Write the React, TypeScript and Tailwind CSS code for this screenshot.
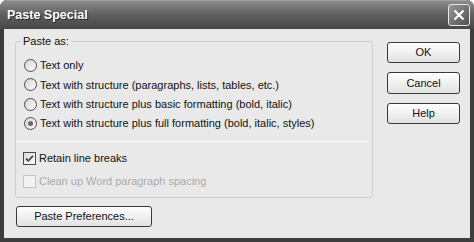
import { useState } from 'react';

const OPTIONS = [
  'Text only',
  'Text with structure (paragraphs, lists, tables, etc.)',
  'Text with structure plus basic formatting (bold, italic)',
  'Text with structure plus full formatting (bold, italic, styles)',
];

const font = "font-['Liberation_Sans',Arial,sans-serif]";

function Radio({ checked }: { checked: boolean }) {
  return (
    <span className="w-[13px] h-[13px] rounded-full border border-[#4a4a4a] bg-gradient-to-br from-[#d8d8d8] to-[#fafafa] flex items-center justify-center shrink-0">
      {checked && <span className="w-[5px] h-[5px] rounded-full bg-[#6a6a6a]" />}
    </span>
  );
}

function Checkbox({ checked, disabled }: { checked: boolean; disabled?: boolean }) {
  return (
    <span
      className={`w-[13px] h-[13px] border shrink-0 flex items-center justify-center ${
        disabled ? 'border-[#c4c4c4] bg-[#f2f2f2]' : 'border-[#4a4a4a] bg-gradient-to-br from-[#dcdcdc] to-[#fbfbfb]'
      }`}
    >
      {checked && (
        <svg width="9" height="9" viewBox="0 0 9 9">
          <path d="M1 4.5 L3.3 6.8 L8 1.8" fill="none" stroke="#4a4a4a" strokeWidth="1.8" />
        </svg>
      )}
    </span>
  );
}

function Button({ label, className = '' }: { label: string; className?: string }) {
  return (
    <button
      className={`h-[21px] rounded-[3px] border border-[#3a3a3a] bg-gradient-to-b from-[#ffffff] to-[#e2e2e2] text-[11px] text-[#111] leading-none flex items-center justify-center ${className}`}
    >
      {label}
    </button>
  );
}

export default function App() {
  const [selected, setSelected] = useState(3);

  return (
    <div className={`w-[474px] h-[242px] bg-[#3d3d3d] rounded-t-[7px] flex flex-col overflow-hidden ${font}`}>
      {/* Title bar */}
      <div className="h-[29px] shrink-0 flex items-center justify-between pl-[7px] pr-[4px] bg-gradient-to-b from-[#8c8c8c] via-[#5e5e5e] to-[#474747] border-t border-[#a0a0a0] rounded-t-[7px]">
        <span className="text-white font-bold text-[12.5px] [text-shadow:1px_1px_0_#2a2a2a]">Paste Special</span>
        <div className="w-[22px] h-[22px] rounded-[3px] border border-[#e8e8e8] bg-gradient-to-br from-[#9a9a9a] to-[#505050] flex items-center justify-center">
          <svg width="12" height="12" viewBox="0 0 12 12">
            <path d="M1.5 1.5 L10.5 10.5 M10.5 1.5 L1.5 10.5" stroke="#ffffff" strokeWidth="2.2" />
          </svg>
        </div>
      </div>

      {/* Body */}
      <div className="flex-1 mx-[4px] mb-[4px] bg-[#e9e9e9] flex text-[11px] text-[#111]">
        <div className="w-[369px] pl-[11px] pt-[6px] flex flex-col">
          <fieldset className="h-[163px] border border-[#cdcdcd] rounded-[3px] flex flex-col">
            <legend className="ml-[5px] px-[2px] leading-[13px]">Paste as:</legend>
            <div className="flex flex-col pt-[8px] pl-[8px]">
              {OPTIONS.map((o, i) => (
                <label key={o} className="h-[19.3px] flex items-center gap-[3px]" onClick={() => setSelected(i)}>
                  <Radio checked={selected === i} />
                  <span>{o}</span>
                </label>
              ))}
            </div>
            <div className="mt-[8px] mr-[4px] h-px bg-[#a8a8a8] border-b border-white" />
            <div className="flex flex-col pl-[7px] pt-[7px]">
              <label className="h-[19px] flex items-center gap-[3px]">
                <Checkbox checked />
                <span>Retain line breaks</span>
              </label>
              <label className="h-[19px] mt-[4px] flex items-center gap-[3px] text-[#a9a9a9]">
                <Checkbox checked={false} disabled />
                <span>Clean up Word paragraph spacing</span>
              </label>
            </div>
          </fieldset>
          <Button label="Paste Preferences..." className="mt-[8px] ml-px w-[136px]" />
        </div>

        <div className="ml-[14px] pt-[13px] flex flex-col gap-[9px]">
          <Button label="OK" className="w-[73px]" />
          <Button label="Cancel" className="w-[73px] h-[22px]" />
          <Button label="Help" className="w-[73px]" />
        </div>
      </div>
    </div>
  );
}
